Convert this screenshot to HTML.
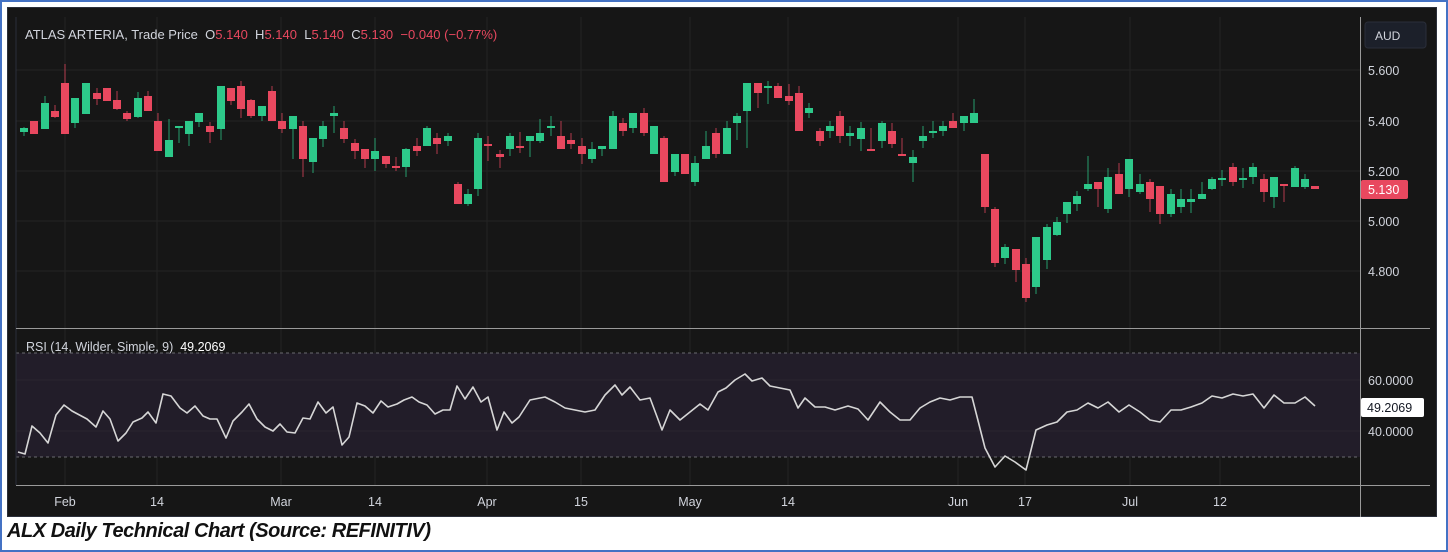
<!DOCTYPE html>
<html><head><meta charset="utf-8"><style>
html,body{margin:0;padding:0;background:#fff;}
body{width:1448px;height:552px;position:relative;overflow:hidden;font-family:"Liberation Sans",sans-serif;}
#frame{position:absolute;left:0px;top:0px;width:1444px;height:548px;border:2px solid #4472c4;}
#chart{position:absolute;left:7px;top:7px;width:1430px;height:510px;background:#161616;border:1px solid #2b2f3a;box-sizing:border-box;}
svg{position:absolute;left:0;top:0;}
#cap{position:absolute;left:7px;top:520px;font-weight:bold;font-style:italic;font-size:20px;color:#111;letter-spacing:-0.45px;white-space:nowrap;}
</style></head><body>
<div id="frame"></div>
<div id="chart"></div>
<svg id="s" width="1448" height="552" font-family="Liberation Sans, sans-serif"></svg>
<div id="cap">ALX Daily Technical Chart (Source: REFINITIV)</div>
<script>
var G='#2dc98a',R='#e8485f';
var c=[[24,128,132,127,136,G],[34,121,134,121,134,R],[45,103,129,96,129,G],[55,111,117,105,118,R],[65,83,134,64,134,R],[75,98,123,98,128,G],[86,83,114,83,114,G],[97,93,99,88,105,R],[107,88,101,88,101,R],[117,100,109,91,110,R],[127,113,119,111,121,R],[138,98,117,92,118,G],[148,96,111,91,111,R],[158,121,151,113,151,R],[169,140,157,119,157,G],[179,126,128,126,143,G],[189,121,134,121,146,G],[199,113,122,113,127,G],[210,126,132,122,143,R],[221,86,129,86,140,G],[231,88,101,88,105,R],[241,86,109,81,118,R],[251,100,116,99,118,R],[262,106,116,106,121,G],[272,91,121,86,121,R],[282,121,129,113,133,R],[293,116,129,116,159,G],[303,126,159,121,177,R],[313,138,162,138,173,G],[323,126,139,121,147,G],[334,113,116,106,133,G],[344,128,139,121,143,R],[355,143,151,139,159,R],[365,149,159,149,168,R],[375,151,159,138,171,G],[386,156,164,156,168,R],[396,166,167,157,171,R],[406,149,167,148,177,G],[417,146,151,138,156,R],[427,128,146,126,146,G],[437,138,144,133,154,R],[448,136,141,133,146,G],[458,184,204,182,204,R],[468,194,204,189,206,G],[478,138,189,133,196,G],[488,144,146,136,161,R],[500,154,157,150,168,R],[510,136,149,133,156,G],[520,146,147,132,153,R],[530,136,141,136,157,G],[540,133,141,119,143,G],[551,126,128,116,136,G],[561,136,149,121,149,R],[571,140,144,133,149,R],[582,146,154,138,164,R],[592,149,159,142,163,G],[602,146,149,146,156,G],[613,116,149,111,149,G],[623,123,131,118,136,R],[633,113,128,113,133,G],[644,113,133,108,136,R],[654,126,154,126,154,G],[664,138,182,136,182,R],[675,154,172,154,176,G],[685,154,174,154,174,R],[695,163,182,156,186,G],[706,146,159,131,159,G],[716,133,154,128,158,R],[727,128,154,121,154,G],[737,116,123,113,140,G],[747,83,111,83,148,G],[758,83,93,83,108,R],[768,86,88,81,104,G],[778,86,98,83,98,R],[789,96,101,84,105,R],[799,93,131,86,131,R],[809,108,113,103,118,G],[820,131,141,128,146,R],[830,126,131,121,138,G],[840,116,136,111,143,R],[850,133,136,126,146,G],[861,128,139,122,151,G],[871,149,150,128,150,R],[882,123,141,121,148,G],[892,131,144,123,148,R],[902,154,156,138,156,R],[913,157,163,150,182,G],[923,136,141,126,148,G],[933,131,133,121,138,G],[943,126,131,121,136,G],[953,121,128,113,128,R],[964,116,123,116,131,G],[974,113,123,99,123,G],[985,154,207,154,213,R],[995,209,263,207,267,R],[1005,247,258,244,264,G],[1016,249,270,249,282,R],[1026,264,298,258,302,R],[1036,237,287,237,294,G],[1047,227,260,224,269,G],[1057,222,235,217,236,G],[1067,202,214,202,223,G],[1077,196,204,191,211,G],[1088,184,189,156,191,G],[1098,182,189,182,207,R],[1108,177,209,168,213,G],[1119,174,194,163,194,R],[1129,159,189,159,197,G],[1140,184,192,174,194,G],[1150,182,199,179,212,R],[1160,186,214,186,224,R],[1171,194,214,189,217,G],[1181,199,207,189,213,G],[1191,199,202,189,213,G],[1202,194,199,182,199,G],[1212,179,189,177,190,G],[1222,178,180,170,186,G],[1233,167,182,163,186,R],[1243,178,180,168,188,G],[1253,167,177,163,184,G],[1264,179,192,174,202,R],[1274,177,197,177,208,G],[1284,184,186,184,202,R],[1295,168,187,166,187,G],[1305,179,187,174,189,G],[1315,186,189,186,189,R]];
var r=[[18,452],[25,454],[32,426],[40,433],[48,443],[56,415],[64,405],[72,411],[87,419],[96,427],[103,411],[110,419],[118,441],[126,433],[133,422],[142,418],[148,412],[156,423],[163,394],[171,396],[180,408],[187,413],[195,406],[203,416],[210,419],[217,419],[226,438],[233,421],[242,412],[249,404],[257,419],[265,427],[273,431],[280,424],[287,432],[295,433],[303,418],[310,419],[318,402],[326,413],[333,407],[342,445],[349,437],[357,403],[365,406],[373,413],[381,401],[388,407],[397,404],[404,400],[412,397],[419,402],[427,405],[435,414],[443,410],[450,410],[457,386],[465,399],[473,387],[481,402],[488,397],[497,430],[504,412],[512,423],[519,417],[530,400],[545,397],[555,402],[565,408],[575,410],[585,412],[595,410],[605,395],[615,385],[622,395],[630,387],[640,400],[650,398],[662,430],[670,410],[680,420],[690,412],[700,404],[708,410],[718,392],[726,388],[735,380],[745,374],[752,381],[762,378],[770,386],[780,388],[790,390],[798,408],[805,398],[815,407],[825,407],[835,410],[848,406],[858,409],[868,420],[880,402],[890,412],[900,420],[910,420],[920,408],[930,402],[940,398],[950,400],[960,397],[972,397],[985,448],[995,467],[1005,456],[1015,462],[1026,470],[1036,430],[1047,425],[1057,422],[1067,412],[1077,410],[1088,403],[1098,408],[1108,402],[1119,412],[1129,405],[1140,412],[1150,420],[1160,422],[1171,410],[1181,410],[1191,407],[1202,403],[1212,396],[1222,398],[1233,394],[1243,396],[1253,394],[1264,408],[1274,395],[1284,403],[1295,403],[1305,397],[1315,406]];
var h='';
var gx=[65,157,281,375,487,581,690,788,958,1025,1130,1220];
gx.forEach(function(x){h+='<line x1="'+x+'" y1="17" x2="'+x+'" y2="485" stroke="#242424" stroke-width="1"/>';});
[70,121,171,221,271].forEach(function(y){h+='<line x1="16" y1="'+y+'" x2="1360" y2="'+y+'" stroke="#242424"/>';});
h+='<rect x="16" y="353" width="1344" height="104" fill="#221d29"/>';
[380,431].forEach(function(y){h+='<line x1="16" y1="'+y+'" x2="1360" y2="'+y+'" stroke="#2a2530"/>';});
h+='<line x1="16" y1="353" x2="1360" y2="353" stroke="#6a6a70" stroke-dasharray="3,3"/>';
h+='<line x1="16" y1="457" x2="1360" y2="457" stroke="#6a6a70" stroke-dasharray="3,3"/>';
h+='<line x1="16" y1="17" x2="16" y2="485" stroke="#2b2f3a"/>';
h+='<line x1="16" y1="328.5" x2="1430" y2="328.5" stroke="#9a9a9a"/>';
h+='<line x1="16" y1="485.5" x2="1430" y2="485.5" stroke="#9a9a9a"/>';
h+='<line x1="1360.5" y1="17" x2="1360.5" y2="517" stroke="#9a9a9a"/>';
c.forEach(function(k){var x=k[0];h+='<line x1="'+x+'" y1="'+k[3]+'" x2="'+x+'" y2="'+k[4]+'" stroke="'+k[5]+'" stroke-opacity="0.75"/>';var hh=Math.max(2,k[2]-k[1]);h+='<rect x="'+(x-4)+'" y="'+k[1]+'" width="8" height="'+hh+'" fill="'+k[5]+'"/>';});
h+='<polyline fill="none" stroke="#d6d6d6" stroke-width="1.6" stroke-linejoin="round" points="'+r.map(function(p){return p.join(',')}).join(' ')+'"/>';
h+='<text x="25" y="39" font-size="13" fill="#d1d4dc">ATLAS ARTERIA, Trade Price&#160; O<tspan fill="'+R+'">5.140</tspan>&#160; H<tspan fill="'+R+'">5.140</tspan>&#160; L<tspan fill="'+R+'">5.140</tspan>&#160; C<tspan fill="'+R+'">5.130</tspan>&#160; <tspan fill="'+R+'">−0.040 (−0.77%)</tspan></text>';
h+='<text x="26" y="351" font-size="12.5" fill="#d1d4dc">RSI (14, Wilder, Simple, 9)&#160; <tspan fill="#fff">49.2069</tspan></text>';
h+='<rect x="1365" y="22" width="61" height="26" rx="3" fill="#1c202a" stroke="#2a2e39"/>';
h+='<text x="1375" y="40" font-size="12" fill="#d1d4dc">AUD</text>';
[['5.600',75],['5.400',126],['5.200',176],['5.000',226],['4.800',276],['60.0000',385],['40.0000',436]].forEach(function(t){h+='<text x="1368" y="'+t[1]+'" font-size="12.5" fill="#d1d4dc">'+t[0]+'</text>';});
h+='<rect x="1361" y="180" width="47" height="19" rx="2" fill="'+R+'"/><text x="1368" y="194" font-size="12.5" fill="#fff">5.130</text>';
h+='<rect x="1361" y="398" width="63" height="19" rx="2" fill="#fff"/><text x="1367" y="412" font-size="12.5" fill="#131722">49.2069</text>';
[['Feb',65],['14',157],['Mar',281],['14',375],['Apr',487],['15',581],['May',690],['14',788],['Jun',958],['17',1025],['Jul',1130],['12',1220]].forEach(function(t){h+='<text x="'+t[1]+'" y="506" font-size="12.5" fill="#d1d4dc" text-anchor="middle">'+t[0]+'</text>';});
document.getElementById('s').innerHTML=h;
</script>
</body></html>
